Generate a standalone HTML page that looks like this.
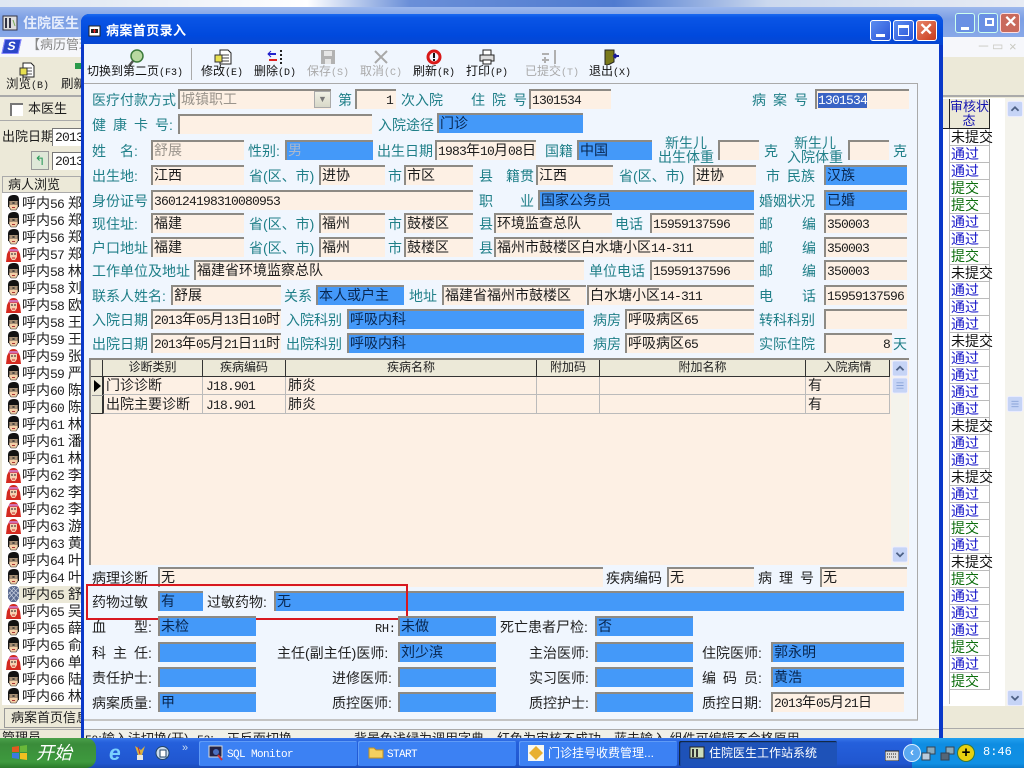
<!DOCTYPE html>
<html lang="zh"><head><meta charset="utf-8"><title>病案首页录入</title>
<style>
html,body{margin:0;padding:0;width:1024px;height:768px;overflow:hidden;background:#ece9d8}
body{position:relative;font:14px/17px "Liberation Sans","Noto Sans CJK SC",sans-serif;color:#1c1c1c}
div,span,b,svg{position:absolute;white-space:nowrap;box-sizing:border-box}
i{font:13px/17px "Liberation Mono",monospace;font-style:normal;letter-spacing:-.8px}
em{font-style:normal;letter-spacing:0}
b{font-weight:normal;height:20px;border-top:2px solid #8d8a84;border-left:2px solid #8d8a84;padding-left:1px;line-height:16px;overflow:hidden}
b.f{background:#fdf0e4}
b.b{background:#4499f9;color:#08264f}
b.s{background:#fdf0e4;color:#9a948c}
span.l{color:#1f7f88}
span.k{color:#222}
.m{left:22px;font-size:14px;color:#222}
.st{left:951px;font-size:14px;line-height:16px;width:38px}
.tbtn{height:25px;top:741px;background:#3c81f3;border-radius:2px;color:#fff;font-size:12px;line-height:24px;box-shadow:inset 1px 1px 0 #5f9bf7}
.tbtn i{color:#fff;line-height:24px;font-size:11px;letter-spacing:-.6px}
.wb{width:21px;height:21px;border:1px solid #fff;border-radius:3px;background:linear-gradient(135deg,#5a8cf0,#2a55d8)}
.hd{top:360px;height:17px;background:#ece9d8;border-right:1px solid #333;border-bottom:1px solid #333;text-align:center;font-size:12px;line-height:15px;color:#222}
.cl{height:18px;border-right:1px solid #bbb;border-bottom:1px solid #bbb;line-height:17px;padding-left:2px;font-size:14px;color:#222}
.r2{height:19px;line-height:19px}
.tb{top:64px;font-size:12px;color:#111;line-height:15px}
.tb i{font-size:10px;letter-spacing:0;line-height:15px}
.gr{color:#aaa}
</style></head><body>
<svg width="0" height="0" style="position:absolute">
<symbol id="ma" viewBox="0 0 15 16"><path d="M2 12V5C2 1 5 0 8 0s5 1 5 5v7z" fill="#111"/><path d="M3 5h9v7l-2 3H5l-2-3z" fill="#f4cfa6" stroke="#222" stroke-width=".6"/><path d="M3 4h9v2H3z" fill="#111"/><path d="M3 7h4v2H3zM8 7h4v2H8z" fill="none" stroke="#222" stroke-width=".8"/><path d="M6 12.500h3" stroke="#a33"/></symbol>
<symbol id="fe" viewBox="0 0 15 16"><path d="M3 4C4 0 11 0 12 4l2 4 1 8H0l1-8z" fill="#d42a20"/><path d="M4 6h7v5l-2 3H6L4 11z" fill="#f6d0b0"/><path d="M3 3h9v2.500H3z" fill="#d070b0"/><path d="M5 8h2M8 8h2" stroke="#222"/><path d="M6 12h3" stroke="#c22"/></symbol>
<symbol id="sl" viewBox="0 0 15 16"><path d="M2 5C2 1 5 0 8 0s5 1 5 5v7l-3 4H5l-3-4z" fill="#5a6a90"/><path d="M3 2l10 10M3 6l7 9M6 1l7 7M12 2L3 12M9 1L2 9M13 6l-8 9" stroke="#c8d0e0" stroke-width=".7"/></symbol>
<symbol id="dn" viewBox="0 0 18 18"><rect x=".5" y=".5" width="17" height="17" rx="2" fill="#c6d4f6" stroke="#eef" /><path d="M5 7l4 4 4-4" fill="none" stroke="#4d6185" stroke-width="2"/></symbol>
<symbol id="up" viewBox="0 0 18 18"><rect x=".5" y=".5" width="17" height="17" rx="2" fill="#c6d4f6" stroke="#eef"/><path d="M5 11l4-4 4 4" fill="none" stroke="#4d6185" stroke-width="2"/></symbol>
<symbol id="th" viewBox="0 0 18 18"><rect x=".5" y=".5" width="17" height="17" rx="2" fill="#c6d4f6" stroke="#eef"/><path d="M5 6h8M5 9h8M5 12h8" stroke="#8aa3d8"/></symbol>
</svg>

<!-- desktop sky -->
<div style="left:0;top:0;width:1024px;height:8px;background:linear-gradient(90deg,#dfe7f2,#e4ebf4 10%,#fff 30%,#6a8fd8 40%,#4f7bd0 60%,#cbd8ee 75%,#e8ecf4)"></div>

<!-- back window -->
<div style="left:0;top:7px;width:1024px;height:30px;background:linear-gradient(#9db8ec,#7c9fe4 40%,#88a8e8)"></div>
<svg style="left:2px;top:15px" width="16" height="16"><rect x="1" y="1" width="14" height="14" fill="#ddd" stroke="#334"/><path d="M4 3v10M8 3v10" stroke="#334" stroke-width="2"/><path d="M11 5l2 6" stroke="#7a5"/></svg>
<span style="left:23px;top:15px;color:#e8eefc;font-size:14px;font-weight:bold">住院医生</span>
<div class="wb" style="left:955px;top:13px;width:20px;height:20px;background:#6a90e4;border-color:#cfe"></div>
<div style="left:961px;top:27px;width:8px;height:3px;background:#fff"></div>
<div class="wb" style="left:978px;top:13px;width:20px;height:20px;background:#6a90e4;border-color:#cfe"></div>
<div style="left:985px;top:18px;width:9px;height:8px;border:2px solid #fff"></div>
<div class="wb" style="left:1000px;top:13px;width:20px;height:20px;background:#c96a5c;border-color:#fdd"></div>
<span style="left:1004px;top:14px;color:#fff;font-size:16px;font-weight:bold">✕</span>
<div style="left:0;top:37px;width:1024px;height:20px;background:#f6f7fb"></div>
<div style="left:3px;top:39px;width:17px;height:15px;background:#2a46c8;border:1px solid #88f;transform:skewX(-12deg);color:#fff;font:bold 12px/13px 'Liberation Sans',sans-serif;text-align:center">S</div>
<span style="left:27px;top:36px;font-size:13px;color:#888">【病历管理</span>
<span style="left:977px;top:38px;color:#c8c8c0;font-size:13px">－</span><span style="left:992px;top:38px;color:#c8c8c0;font-size:12px">▭</span><span style="left:1009px;top:38px;color:#c8c8c0;font-size:13px">×</span>
<div style="left:0;top:57px;width:1024px;height:40px;background:#ece9d8;border-bottom:2px solid #aaa"></div>
<svg style="left:19px;top:62px" width="17" height="16"><path d="M4 1h8l3 3v11H4z" fill="#fff" stroke="#222"/><path d="M6 6h7M6 9h7M6 12h7" stroke="#555"/><path d="M1 6h7v7H1z" fill="#e8e050" stroke="#333"/></svg>
<span style="left:6px;top:76px;font-size:12.5px">浏览<i style="font-size:10px;letter-spacing:0">(B)</i></span>
<span style="left:61px;top:76px;font-size:12.5px">刷新</span>
<div style="left:75px;top:63px;width:6px;height:6px;background:#2a9a4a"></div>
<div style="left:0;top:97px;width:81px;height:24px;background:#ece9d8;border-bottom:1px solid #aaa"></div>
<div style="left:10px;top:103px;width:13px;height:13px;background:#fff;border-top:2px solid #777;border-left:2px solid #777"></div>
<span style="left:28px;top:100px;font-size:13px">本医生</span>
<div style="left:0;top:122px;width:81px;height:54px;background:#ece9d8"></div>
<span style="left:2px;top:128px;font-size:13px">出院日期</span>
<div style="left:52px;top:128px;width:30px;height:18px;background:#fff;border-top:1px solid #777;border-left:1px solid #777"><i style="position:absolute;left:2px;top:0">2013</i></div>
<div style="left:52px;top:152px;width:30px;height:18px;background:#fff;border-top:1px solid #777;border-left:1px solid #777"><i style="position:absolute;left:2px;top:0">2013</i></div>
<div style="left:31px;top:151px;width:18px;height:19px;background:#dfe8d8;border:1px solid #999;color:#2a9a5a;font-size:13px;line-height:17px;text-align:center">↰</div>
<div style="left:2px;top:176px;width:79px;height:17px;background:#ece9d8;border:1px solid #aaa;font-size:13px;line-height:15px;padding-left:5px">病人浏览</div>
<div style="left:2px;top:193px;width:79px;height:512px;background:#fff"></div>
<div style="left:19px;top:586px;width:62px;height:17px;background:#ece9d8"></div>

<svg style="left:6px;top:195px" width="15" height="16"><use href="#ma"/></svg><span class="m" style="top:195px">呼内<i>56</i> 郑</span>
<svg style="left:6px;top:212px" width="15" height="16"><use href="#ma"/></svg><span class="m" style="top:212px">呼内<i>56</i> 郑</span>
<svg style="left:6px;top:229px" width="15" height="16"><use href="#ma"/></svg><span class="m" style="top:229px">呼内<i>56</i> 郑</span>
<svg style="left:6px;top:246px" width="15" height="16"><use href="#fe"/></svg><span class="m" style="top:246px">呼内<i>57</i> 郑</span>
<svg style="left:6px;top:263px" width="15" height="16"><use href="#ma"/></svg><span class="m" style="top:263px">呼内<i>58</i> 林</span>
<svg style="left:6px;top:280px" width="15" height="16"><use href="#ma"/></svg><span class="m" style="top:280px">呼内<i>58</i> 刘</span>
<svg style="left:6px;top:297px" width="15" height="16"><use href="#fe"/></svg><span class="m" style="top:297px">呼内<i>58</i> 欧</span>
<svg style="left:6px;top:314px" width="15" height="16"><use href="#ma"/></svg><span class="m" style="top:314px">呼内<i>58</i> 王</span>
<svg style="left:6px;top:331px" width="15" height="16"><use href="#ma"/></svg><span class="m" style="top:331px">呼内<i>59</i> 王</span>
<svg style="left:6px;top:348px" width="15" height="16"><use href="#fe"/></svg><span class="m" style="top:348px">呼内<i>59</i> 张</span>
<svg style="left:6px;top:365px" width="15" height="16"><use href="#ma"/></svg><span class="m" style="top:365px">呼内<i>59</i> 严</span>
<svg style="left:6px;top:382px" width="15" height="16"><use href="#ma"/></svg><span class="m" style="top:382px">呼内<i>60</i> 陈</span>
<svg style="left:6px;top:399px" width="15" height="16"><use href="#ma"/></svg><span class="m" style="top:399px">呼内<i>60</i> 陈</span>
<svg style="left:6px;top:416px" width="15" height="16"><use href="#ma"/></svg><span class="m" style="top:416px">呼内<i>61</i> 林</span>
<svg style="left:6px;top:433px" width="15" height="16"><use href="#ma"/></svg><span class="m" style="top:433px">呼内<i>61</i> 潘</span>
<svg style="left:6px;top:450px" width="15" height="16"><use href="#ma"/></svg><span class="m" style="top:450px">呼内<i>61</i> 林</span>
<svg style="left:6px;top:467px" width="15" height="16"><use href="#fe"/></svg><span class="m" style="top:467px">呼内<i>62</i> 李</span>
<svg style="left:6px;top:484px" width="15" height="16"><use href="#fe"/></svg><span class="m" style="top:484px">呼内<i>62</i> 李</span>
<svg style="left:6px;top:501px" width="15" height="16"><use href="#fe"/></svg><span class="m" style="top:501px">呼内<i>62</i> 李</span>
<svg style="left:6px;top:518px" width="15" height="16"><use href="#fe"/></svg><span class="m" style="top:518px">呼内<i>63</i> 游</span>
<svg style="left:6px;top:535px" width="15" height="16"><use href="#ma"/></svg><span class="m" style="top:535px">呼内<i>63</i> 黄</span>
<svg style="left:6px;top:552px" width="15" height="16"><use href="#ma"/></svg><span class="m" style="top:552px">呼内<i>64</i> 叶</span>
<svg style="left:6px;top:569px" width="15" height="16"><use href="#ma"/></svg><span class="m" style="top:569px">呼内<i>64</i> 叶</span>
<svg style="left:6px;top:586px" width="15" height="16"><use href="#sl"/></svg><span class="m" style="top:586px">呼内<i>65</i> 舒</span>
<svg style="left:6px;top:603px" width="15" height="16"><use href="#fe"/></svg><span class="m" style="top:603px">呼内<i>65</i> 吴</span>
<svg style="left:6px;top:620px" width="15" height="16"><use href="#ma"/></svg><span class="m" style="top:620px">呼内<i>65</i> 薛</span>
<svg style="left:6px;top:637px" width="15" height="16"><use href="#ma"/></svg><span class="m" style="top:637px">呼内<i>65</i> 俞</span>
<svg style="left:6px;top:654px" width="15" height="16"><use href="#fe"/></svg><span class="m" style="top:654px">呼内<i>66</i> 单</span>
<svg style="left:6px;top:671px" width="15" height="16"><use href="#ma"/></svg><span class="m" style="top:671px">呼内<i>66</i> 陆</span>
<svg style="left:6px;top:688px" width="15" height="16"><use href="#ma"/></svg><span class="m" style="top:688px">呼内<i>66</i> 林</span>

<div style="left:4px;top:708px;width:78px;height:20px;background:#ece9d8;border:1px solid #999;font-size:13px;line-height:18px;padding-left:6px;overflow:hidden">病案首页信息</div>
<div style="left:0;top:729px;width:81px;height:12px;background:#ece9d8;border-top:1px solid #aaa;font-size:13px;padding-left:2px;line-height:16px;overflow:hidden">管理员</div>

<!-- right of back window -->
<div style="left:943px;top:97px;width:81px;height:3px;background:#ece9d8;border-bottom:1px solid #aaa"></div>
<div style="left:943px;top:98px;width:81px;height:608px;background:#fff"></div>
<div style="left:1005px;top:98px;width:19px;height:608px;background:#f4f3ec"></div>
<div style="left:943px;top:706px;width:81px;height:22px;background:#ece9d8"></div>
<div style="left:943px;top:728px;width:81px;height:12px;background:#ece9d8;border-top:1px solid #aaa"></div>
<div style="left:943px;top:99px;width:47px;height:30px;background:#ece9d8;border-right:1px solid #222;border-bottom:1px solid #222"></div>
<div style="left:949px;top:99px;width:1px;height:30px;background:#222"></div>
<span class="st" style="top:100px;color:#1515b0;line-height:14px;text-align:center;font-size:13px;width:38px;left:950px">审核状<br>态</span>
<div style="left:949px;top:129px;width:1px;height:575px;background:#bbb"></div>
<div style="left:989px;top:129px;width:1px;height:560px;background:#bbb"></div>
<div style="left:950px;top:145px;width:40px;height:1px;background:#bbb"></div><div style="left:950px;top:162px;width:40px;height:1px;background:#bbb"></div><div style="left:950px;top:179px;width:40px;height:1px;background:#bbb"></div><div style="left:950px;top:196px;width:40px;height:1px;background:#bbb"></div><div style="left:950px;top:213px;width:40px;height:1px;background:#bbb"></div><div style="left:950px;top:230px;width:40px;height:1px;background:#bbb"></div><div style="left:950px;top:247px;width:40px;height:1px;background:#bbb"></div><div style="left:950px;top:264px;width:40px;height:1px;background:#bbb"></div><div style="left:950px;top:281px;width:40px;height:1px;background:#bbb"></div><div style="left:950px;top:298px;width:40px;height:1px;background:#bbb"></div><div style="left:950px;top:315px;width:40px;height:1px;background:#bbb"></div><div style="left:950px;top:332px;width:40px;height:1px;background:#bbb"></div><div style="left:950px;top:349px;width:40px;height:1px;background:#bbb"></div><div style="left:950px;top:366px;width:40px;height:1px;background:#bbb"></div><div style="left:950px;top:383px;width:40px;height:1px;background:#bbb"></div><div style="left:950px;top:400px;width:40px;height:1px;background:#bbb"></div><div style="left:950px;top:417px;width:40px;height:1px;background:#bbb"></div><div style="left:950px;top:434px;width:40px;height:1px;background:#bbb"></div><div style="left:950px;top:451px;width:40px;height:1px;background:#bbb"></div><div style="left:950px;top:468px;width:40px;height:1px;background:#bbb"></div><div style="left:950px;top:485px;width:40px;height:1px;background:#bbb"></div><div style="left:950px;top:502px;width:40px;height:1px;background:#bbb"></div><div style="left:950px;top:519px;width:40px;height:1px;background:#bbb"></div><div style="left:950px;top:536px;width:40px;height:1px;background:#bbb"></div><div style="left:950px;top:553px;width:40px;height:1px;background:#bbb"></div><div style="left:950px;top:570px;width:40px;height:1px;background:#bbb"></div><div style="left:950px;top:587px;width:40px;height:1px;background:#bbb"></div><div style="left:950px;top:604px;width:40px;height:1px;background:#bbb"></div><div style="left:950px;top:621px;width:40px;height:1px;background:#bbb"></div><div style="left:950px;top:638px;width:40px;height:1px;background:#bbb"></div><div style="left:950px;top:655px;width:40px;height:1px;background:#bbb"></div><div style="left:950px;top:672px;width:40px;height:1px;background:#bbb"></div><div style="left:950px;top:689px;width:40px;height:1px;background:#bbb"></div>
<span class="st" style="top:129px;color:#111">未提交</span>
<span class="st" style="top:146px;color:#1515c8">通过</span>
<span class="st" style="top:163px;color:#1515c8">通过</span>
<span class="st" style="top:180px;color:#0d6e0d">提交</span>
<span class="st" style="top:197px;color:#0d6e0d">提交</span>
<span class="st" style="top:214px;color:#1515c8">通过</span>
<span class="st" style="top:231px;color:#1515c8">通过</span>
<span class="st" style="top:248px;color:#0d6e0d">提交</span>
<span class="st" style="top:265px;color:#111">未提交</span>
<span class="st" style="top:282px;color:#1515c8">通过</span>
<span class="st" style="top:299px;color:#1515c8">通过</span>
<span class="st" style="top:316px;color:#1515c8">通过</span>
<span class="st" style="top:333px;color:#111">未提交</span>
<span class="st" style="top:350px;color:#1515c8">通过</span>
<span class="st" style="top:367px;color:#1515c8">通过</span>
<span class="st" style="top:384px;color:#1515c8">通过</span>
<span class="st" style="top:401px;color:#1515c8">通过</span>
<span class="st" style="top:418px;color:#111">未提交</span>
<span class="st" style="top:435px;color:#1515c8">通过</span>
<span class="st" style="top:452px;color:#1515c8">通过</span>
<span class="st" style="top:469px;color:#111">未提交</span>
<span class="st" style="top:486px;color:#1515c8">通过</span>
<span class="st" style="top:503px;color:#1515c8">通过</span>
<span class="st" style="top:520px;color:#0d6e0d">提交</span>
<span class="st" style="top:537px;color:#1515c8">通过</span>
<span class="st" style="top:554px;color:#111">未提交</span>
<span class="st" style="top:571px;color:#0d6e0d">提交</span>
<span class="st" style="top:588px;color:#1515c8">通过</span>
<span class="st" style="top:605px;color:#1515c8">通过</span>
<span class="st" style="top:622px;color:#1515c8">通过</span>
<span class="st" style="top:639px;color:#0d6e0d">提交</span>
<span class="st" style="top:656px;color:#1515c8">通过</span>
<span class="st" style="top:673px;color:#0d6e0d">提交</span>
<svg style="left:1007px;top:100px" width="16" height="18"><use href="#up"/></svg>
<svg style="left:1007px;top:395px" width="16" height="18"><use href="#th"/></svg>
<svg style="left:1007px;top:689px" width="16" height="18"><use href="#dn"/></svg>

<!-- dialog -->
<div style="left:81px;top:14px;width:862px;height:725px;background:#0a38c8;border-radius:8px 8px 0 0"></div>
<div style="left:81px;top:14px;width:862px;height:31px;background:linear-gradient(#1a6af0,#0a55e6 12%,#0049dd 70%,#0746d0);border-radius:8px 8px 0 0"></div>
<div style="left:84px;top:44px;width:855px;height:695px;background:#f0f6fe"></div>
<svg style="left:88px;top:24px" width="13" height="13"><rect x="1" y="2" width="11" height="10" fill="#fff" stroke="#222"/><rect x="3" y="5" width="7" height="4" fill="#222"/><path d="M6.500 5v4M5 7h3" stroke="#e22"/></svg>
<span style="left:106px;top:22px;color:#fff;font-size:13px;font-weight:bold;letter-spacing:.4px">病案首页录入</span>
<div class="wb" style="left:870px;top:20px"></div><div style="left:876px;top:34px;width:9px;height:3px;background:#fff"></div>
<div class="wb" style="left:893px;top:20px"></div><div style="left:898px;top:25px;width:11px;height:11px;border:1px solid #fff;border-top-width:3px"></div>
<div class="wb" style="left:916px;top:20px;background:linear-gradient(135deg,#e8866a,#c83a1c)"></div>
<span style="left:919px;top:21px;color:#fff;font-size:17px;font-weight:bold">✕</span>

<!-- toolbar -->
<div style="left:191px;top:48px;width:1px;height:32px;background:#aaa"></div>
<svg style="left:127px;top:49px" width="18" height="18"><circle cx="10" cy="7" r="6" fill="#b8d8a0" stroke="#3c7a3c" stroke-width="1.500"/><path d="M6 12L2 17" stroke="#555" stroke-width="2.500"/></svg>
<span class="tb" style="left:87px">切换到第二页<i>(F3)</i></span>
<svg style="left:214px;top:49px" width="18" height="16"><path d="M6 1h8l3 3v11H6z" fill="#fff" stroke="#222"/><path d="M8 6h7M8 9h7M8 12h7" stroke="#444"/><path d="M1 6h7v7H1z" fill="#e8e050" stroke="#333"/></svg>
<span class="tb" style="left:201px">修改<i>(E)</i></span>
<svg style="left:267px;top:49px" width="18" height="16"><path d="M1 5h8" stroke="#2222cc" stroke-width="2"/><path d="M4 2L1 5l3 3" fill="none" stroke="#2222cc"/><path d="M2 11h8" stroke="#d22" stroke-width="2"/><path d="M14 1v15" stroke="#222" stroke-width="2" stroke-dasharray="2 2"/></svg>
<span class="tb" style="left:254px">删除<i>(D)</i></span>
<svg style="left:321px;top:50px" width="14" height="14"><rect width="14" height="14" fill="#b2b2b2"/><rect x="3" y="1" width="8" height="5" fill="#e6e6e6"/><rect x="4" y="9" width="6" height="5" fill="#e6e6e6"/></svg>
<span class="tb gr" style="left:307px">保存<i>(S)</i></span>
<svg style="left:374px;top:50px" width="14" height="14"><path d="M1 1l12 12M13 1L1 13" stroke="#a8a8a8" stroke-width="2"/></svg>
<span class="tb gr" style="left:360px">取消<i>(C)</i></span>
<svg style="left:426px;top:49px" width="16" height="16"><circle cx="8" cy="8" r="6" fill="none" stroke="#d81818" stroke-width="3"/><path d="M8 4v5M8 10v2" stroke="#111" stroke-width="2"/></svg>
<span class="tb" style="left:413px">刷新<i>(R)</i></span>
<svg style="left:479px;top:49px" width="16" height="16"><path d="M4 1h8v5H4z" fill="#fff" stroke="#222"/><path d="M1 6h14v6H1z" fill="#ddd" stroke="#222"/><path d="M4 11h8v4H4z" fill="#fff" stroke="#222"/></svg>
<span class="tb" style="left:466px">打印<i>(P)</i></span>
<svg style="left:541px;top:50px" width="16" height="14"><path d="M1 4h7M1 10h7M4 7v6M14 0v14" stroke="#b0b0b0" stroke-width="2"/></svg>
<span class="tb gr" style="left:525px">已提交<i>(T)</i></span>
<svg style="left:604px;top:49px" width="16" height="16"><path d="M1 1h9v12l-6 3H1z" fill="#7a7a1c" stroke="#222"/><path d="M10 7h5M12 5l-2 2 2 2" stroke="#1a1a9a" stroke-width="2" fill="none"/></svg>
<span class="tb" style="left:589px">退出<i>(X)</i></span>

<!-- form panel -->
<div style="left:84px;top:83px;width:834px;height:1px;background:#aaa"></div>
<div style="left:84px;top:719px;width:834px;height:2px;background:#c4c4c4"></div>
<div style="left:917px;top:83px;width:1px;height:637px;background:#aaa"></div>

<span class="l" style="left:92px;top:92px">医疗付款方式</span>
<b class="s" style="left:178px;top:89px;width:153px">城镇职工</b>
<div style="left:314px;top:91px;width:17px;height:17px;background:linear-gradient(#f0f0e4,#d8d8c8);border:1px solid #aaa;color:#777;font-size:9px;line-height:15px;text-align:center">▼</div>
<span class="l" style="left:338px;top:92px">第</span>
<b class="f" style="left:355px;top:89px;width:41px;text-align:right;padding-right:3px"><i>1</i></b>
<span class="l" style="left:401px;top:92px">次入院</span>
<span class="l" style="left:471px;top:92px;letter-spacing:7px">住院号</span>
<b class="f" style="left:529px;top:89px;width:82px"><i>1301534</i></b>
<span class="l" style="left:752px;top:92px;letter-spacing:7px">病案号</span>
<b class="f" style="left:815px;top:89px;width:94px"><i style="background:#3a63c4;color:#fff;display:inline-block;line-height:15px">1301534</i></b>

<span class="l" style="left:92px;top:117px;letter-spacing:7px">健康卡<em>号:</em></span>
<b class="f" style="left:178px;top:114px;width:194px"></b>
<span class="l" style="left:378px;top:117px">入院途径</span>
<b class="b" style="left:437px;top:113px;width:146px">门诊</b>

<span class="l" style="left:92px;top:143px;letter-spacing:14px">姓<em>名:</em></span>
<b class="s" style="left:151px;top:140px;width:93px">舒展</b>
<span class="l" style="left:248px;top:143px">性别:</span>
<b class="b" style="left:285px;top:140px;width:88px;color:#aab8cc">男</b>
<span class="l" style="left:377px;top:143px">出生日期</span>
<b class="f" style="left:435px;top:140px;width:101px"><i>1983</i>年<i>10</i>月<i>08</i>日</b>
<span class="l" style="left:545px;top:143px">国籍</span>
<b class="b" style="left:577px;top:140px;width:75px">中国</b>
<span class="l" style="left:658px;top:136px;width:56px;text-align:center;line-height:14px">新生儿<br>出生体重</span>
<b class="f" style="left:718px;top:140px;width:41px"></b>
<span class="l" style="left:764px;top:143px">克</span>
<span class="l" style="left:787px;top:136px;width:56px;text-align:center;line-height:14px">新生儿<br>入院体重</span>
<b class="f" style="left:848px;top:140px;width:41px"></b>
<span class="l" style="left:893px;top:143px">克</span>

<span class="l" style="left:92px;top:168px">出生地:</span>
<b class="f" style="left:151px;top:165px;width:93px">江西</b>
<span class="l" style="left:249px;top:168px">省(区、市)</span>
<b class="f" style="left:319px;top:165px;width:66px">进协</b>
<span class="l" style="left:388px;top:168px">市</span>
<b class="f" style="left:404px;top:165px;width:69px">市区</b>
<span class="l" style="left:479px;top:168px">县</span>
<span class="l" style="left:506px;top:168px">籍贯</span>
<b class="f" style="left:536px;top:165px;width:77px">江西</b>
<span class="l" style="left:619px;top:168px">省(区、市)</span>
<b class="f" style="left:693px;top:165px;width:63px">进协</b>
<span class="l" style="left:766px;top:168px">市</span>
<span class="l" style="left:787px;top:168px">民族</span>
<b class="b" style="left:824px;top:165px;width:83px">汉族</b>

<span class="l" style="left:92px;top:193px">身份证号</span>
<b class="f" style="left:151px;top:190px;width:322px"><i>360124198310080953</i></b>
<span class="l" style="left:479px;top:193px">职</span>
<span class="l" style="left:520px;top:193px">业</span>
<b class="b" style="left:538px;top:190px;width:216px">国家公务员</b>
<span class="l" style="left:759px;top:193px">婚姻状况</span>
<b class="b" style="left:824px;top:190px;width:83px">已婚</b>

<span class="l" style="left:92px;top:216px">现住址:</span>
<b class="f" style="left:151px;top:213px;width:93px">福建</b>
<span class="l" style="left:249px;top:216px">省(区、市)</span>
<b class="f" style="left:319px;top:213px;width:66px">福州</b>
<span class="l" style="left:388px;top:216px">市</span>
<b class="f" style="left:404px;top:213px;width:69px">鼓楼区</b>
<span class="l" style="left:479px;top:216px">县</span>
<b class="f" style="left:494px;top:213px;width:118px">环境监查总队</b>
<span class="l" style="left:615px;top:216px">电话</span>
<b class="f" style="left:650px;top:213px;width:104px"><i>15959137596</i></b>
<span class="l" style="left:759px;top:216px">邮</span><span class="l" style="left:802px;top:216px">编</span>
<b class="f" style="left:824px;top:213px;width:83px"><i>350003</i></b>

<span class="l" style="left:92px;top:240px">户口地址</span>
<b class="f" style="left:151px;top:237px;width:93px">福建</b>
<span class="l" style="left:249px;top:240px">省(区、市)</span>
<b class="f" style="left:319px;top:237px;width:66px">福州</b>
<span class="l" style="left:388px;top:240px">市</span>
<b class="f" style="left:404px;top:237px;width:69px">鼓楼区</b>
<span class="l" style="left:479px;top:240px">县</span>
<b class="f" style="left:494px;top:237px;width:260px">福州市鼓楼区白水塘小区<i>14-311</i></b>
<span class="l" style="left:759px;top:240px">邮</span><span class="l" style="left:802px;top:240px">编</span>
<b class="f" style="left:824px;top:237px;width:83px"><i>350003</i></b>

<span class="l" style="left:92px;top:263px">工作单位及地址</span>
<b class="f" style="left:194px;top:260px;width:390px">福建省环境监察总队</b>
<span class="l" style="left:589px;top:263px">单位电话</span>
<b class="f" style="left:650px;top:260px;width:104px"><i>15959137596</i></b>
<span class="l" style="left:759px;top:263px">邮</span><span class="l" style="left:802px;top:263px">编</span>
<b class="f" style="left:824px;top:260px;width:83px"><i>350003</i></b>

<span class="l" style="left:92px;top:288px">联系人姓名:</span>
<b class="f" style="left:171px;top:285px;width:110px">舒展</b>
<span class="l" style="left:284px;top:288px">关系</span>
<b class="b" style="left:316px;top:285px;width:88px">本人或户主</b>
<span class="l" style="left:409px;top:288px">地址</span>
<b class="f" style="left:442px;top:285px;width:144px">福建省福州市鼓楼区</b>
<b class="f" style="left:587px;top:285px;width:167px">白水塘小区<i>14-311</i></b>
<span class="l" style="left:759px;top:288px">电</span><span class="l" style="left:802px;top:288px">话</span>
<b class="f" style="left:824px;top:285px;width:83px"><i>15959137596</i></b>

<span class="l" style="left:92px;top:312px">入院日期</span>
<b class="f" style="left:151px;top:309px;width:130px"><i>2013</i>年<i>05</i>月<i>13</i>日<i>10</i>时</b>
<span class="l" style="left:286px;top:312px">入院科别</span>
<b class="b" style="left:347px;top:309px;width:237px">呼吸内科</b>
<span class="l" style="left:593px;top:312px">病房</span>
<b class="f" style="left:625px;top:309px;width:129px">呼吸病区<i>65</i></b>
<span class="l" style="left:759px;top:312px">转科科别</span>
<b class="f" style="left:824px;top:309px;width:83px"></b>

<span class="l" style="left:92px;top:336px">出院日期</span>
<b class="f" style="left:151px;top:333px;width:130px"><i>2013</i>年<i>05</i>月<i>21</i>日<i>11</i>时</b>
<span class="l" style="left:286px;top:336px">出院科别</span>
<b class="b" style="left:347px;top:333px;width:237px">呼吸内科</b>
<span class="l" style="left:593px;top:336px">病房</span>
<b class="f" style="left:625px;top:333px;width:129px">呼吸病区<i>65</i></b>
<span class="l" style="left:759px;top:336px">实际住院</span>
<b class="f" style="left:824px;top:333px;width:68px;text-align:right;padding-right:2px"><i>8</i></b>
<span class="l" style="left:893px;top:336px">天</span>

<!-- grid -->
<div style="left:89px;top:358px;width:820px;height:207px;background:#fdf0e4;border-top:2px solid #8d8a84;border-left:2px solid #8d8a84"></div>
<div class="hd" style="left:91px;width:12px"></div>
<div class="hd" style="left:103px;width:100px">诊断类别</div>
<div class="hd" style="left:203px;width:83px">疾病编码</div>
<div class="hd" style="left:286px;width:251px">疾病名称</div>
<div class="hd" style="left:537px;width:63px">附加码</div>
<div class="hd" style="left:600px;width:206px">附加名称</div>
<div class="hd" style="left:806px;width:84px">入院病情</div>
<div style="left:91px;top:377px;width:12px;height:37px;background:#ece9d8;border-right:1px solid #333;border-bottom:1px solid #333"></div>
<div style="left:92px;top:395px;width:11px;height:1px;background:#999"></div>
<span style="left:94px;top:380px;width:0;height:0;border-left:7px solid #000;border-top:6px solid transparent;border-bottom:6px solid transparent"></span>
<div class="cl" style="left:103px;top:377px;width:100px;border-left:1px solid #333">门诊诊断</div>
<div class="cl" style="left:203px;top:377px;width:83px"><i style="padding-left:1px">J18.901</i></div>
<div class="cl" style="left:286px;top:377px;width:251px">肺炎</div>
<div class="cl" style="left:537px;top:377px;width:63px"></div>
<div class="cl" style="left:600px;top:377px;width:206px"></div>
<div class="cl" style="left:806px;top:377px;width:84px">有</div>
<div class="cl r2" style="left:103px;top:395px;width:100px;border-left:1px solid #333">出院主要诊断</div>
<div class="cl r2" style="left:203px;top:395px;width:83px"><i style="padding-left:1px">J18.901</i></div>
<div class="cl r2" style="left:286px;top:395px;width:251px">肺炎</div>
<div class="cl r2" style="left:537px;top:395px;width:63px"></div>
<div class="cl r2" style="left:600px;top:395px;width:206px"></div>
<div class="cl r2" style="left:806px;top:395px;width:84px">有</div>
<div style="left:891px;top:360px;width:17px;height:205px;background:#f4f3ec"></div>
<svg style="left:892px;top:360px" width="16" height="17"><use href="#up"/></svg>
<svg style="left:892px;top:377px" width="16" height="17"><use href="#th"/></svg>
<svg style="left:892px;top:546px" width="16" height="17"><use href="#dn"/></svg>

<!-- bottom rows -->
<span class="k" style="left:92px;top:570px">病理诊断</span>
<b class="f" style="left:158px;top:567px;width:445px">无</b>
<span class="k" style="left:606px;top:570px">疾病编码</span>
<b class="f" style="left:667px;top:567px;width:87px">无</b>
<span class="k" style="left:758px;top:570px;letter-spacing:7px">病理号</span>
<b class="f" style="left:820px;top:567px;width:87px">无</b>

<span class="k" style="left:92px;top:594px">药物过敏</span>
<b class="b" style="left:158px;top:591px;width:45px">有</b>
<span class="k" style="left:207px;top:594px">过敏药物:</span>
<b class="b" style="left:274px;top:591px;width:630px">无</b>
<div style="left:86px;top:584px;width:322px;height:36px;border:2px solid #d81820"></div>

<span class="k" style="left:92px;top:619px;letter-spacing:28px">血<em>型:</em></span>
<b class="b" style="left:158px;top:616px;width:98px">未检</b>
<span class="k" style="left:375px;top:619px"><i style="font-size:12px;letter-spacing:-.3px">RH:</i></span>
<b class="b" style="left:398px;top:616px;width:98px">未做</b>
<span class="k" style="left:500px;top:619px">死亡患者尸检:</span>
<b class="b" style="left:595px;top:616px;width:98px">否</b>

<span class="k" style="left:92px;top:645px;letter-spacing:7px">科主<em>任:</em></span>
<b class="b" style="left:158px;top:642px;width:98px"></b>
<span class="k" style="left:277px;top:645px">主任(副主任)医师:</span>
<b class="b" style="left:398px;top:642px;width:98px">刘少滨</b>
<span class="k" style="left:529px;top:645px">主治医师:</span>
<b class="b" style="left:595px;top:642px;width:98px"></b>
<span class="k" style="left:702px;top:645px">住院医师:</span>
<b class="b" style="left:771px;top:642px;width:133px">郭永明</b>

<span class="k" style="left:92px;top:670px">责任护士:</span>
<b class="b" style="left:158px;top:667px;width:98px"></b>
<span class="k" style="left:332px;top:670px">进修医师:</span>
<b class="b" style="left:398px;top:667px;width:98px"></b>
<span class="k" style="left:529px;top:670px">实习医师:</span>
<b class="b" style="left:595px;top:667px;width:98px"></b>
<span class="k" style="left:702px;top:670px;letter-spacing:7px">编码<em>员:</em></span>
<b class="b" style="left:771px;top:667px;width:133px">黄浩</b>

<span class="k" style="left:92px;top:695px">病案质量:</span>
<b class="b" style="left:158px;top:692px;width:98px">甲</b>
<span class="k" style="left:332px;top:695px">质控医师:</span>
<b class="b" style="left:398px;top:692px;width:98px"></b>
<span class="k" style="left:529px;top:695px">质控护士:</span>
<b class="b" style="left:595px;top:692px;width:98px"></b>
<span class="k" style="left:702px;top:695px">质控日期:</span>
<b class="f" style="left:771px;top:692px;width:133px"><i>2013</i>年<i>05</i>月<i>21</i>日</b>

<!-- status bar -->
<div style="left:84px;top:729px;width:855px;height:10px;overflow:hidden;font-size:13px;color:#222;background:#f0f0e8;border-top:1px solid #aaa">
<span style="left:1px;top:0"><i style="font-size:11px;letter-spacing:0">F9</i>:输入法切换(开)</span>
<span style="left:113px;top:0"><i style="font-size:11px;letter-spacing:0">F3</i>:　正反面切换</span>
<span style="left:270px;top:0">背景色浅绿为调用字典，红色为审核不成功</span>
<span style="left:530px;top:0">蓝去输入 组件可编辑不合格原用</span>
</div>

<!-- taskbar -->
<div style="left:0;top:738px;width:1024px;height:30px;background:linear-gradient(#3a78ea,#2560dc 15%,#2056cf 85%,#1a48b4)"></div>
<div style="left:0;top:738px;width:96px;height:30px;background:linear-gradient(#4aa04a,#3a8c3a 20%,#3e9a3e 80%,#2a7a2a);border-radius:0 10px 10px 0"></div>
<svg style="left:10px;top:744px" width="19" height="18"><path d="M2 3l7-1v6H2z" fill="#e25a20"/><path d="M10 2l7-1v7h-7z" fill="#6ab83a"/><path d="M2 9h7v6l-7-1z" fill="#3a7ae0"/><path d="M10 9h7v7l-7-1z" fill="#f0c020"/></svg>
<span style="left:36px;top:741px;color:#fff;font-size:18px;line-height:24px;font-style:italic">开始</span>
<span style="left:109px;top:742px;color:#7ad0ff;font:italic bold 21px/24px 'Liberation Sans',sans-serif">e</span>
<svg style="left:133px;top:745px" width="14" height="16"><path d="M2 1l3 9h4l3-9-4 4z" fill="#d8b040"/><path d="M4 10h6v5H4z" fill="#e8e8e0"/><path d="M5 2l2 7" stroke="#c03030"/></svg>
<svg style="left:155px;top:745px" width="15" height="16"><circle cx="7.500" cy="8" r="6.500" fill="#cde" stroke="#246"/><path d="M5 5h6v7H5z" fill="#fff" stroke="#246"/></svg>
<span style="left:182px;top:740px;color:#cde;font-size:11px">»</span>
<div class="tbtn" style="left:199px;width:158px;padding-left:28px"><i>SQL Monitor</i></div>
<svg style="left:208px;top:745px" width="16" height="16"><rect x="1" y="1" width="13" height="11" fill="#224" stroke="#ddd"/><circle cx="8" cy="7" r="3" fill="#4a70c0"/><path d="M10 10l4 5" stroke="#c33" stroke-width="2"/></svg>
<div class="tbtn" style="left:358px;width:158px;padding-left:29px"><i>START</i></div>
<svg style="left:368px;top:745px" width="16" height="14"><path d="M1 3h5l2 2h7v8H1z" fill="#f4d060" stroke="#c09020"/></svg>
<div class="tbtn" style="left:519px;width:158px;padding-left:29px;overflow:hidden">门诊挂号收费管理...</div>
<svg style="left:528px;top:745px" width="16" height="16"><rect width="16" height="16" fill="#f8f8f0"/><path d="M8 1l7 7-7 7-7-7z" fill="#e8b030"/></svg>
<div class="tbtn" style="left:679px;width:158px;padding-left:30px;background:#1e52b8;box-shadow:inset 1px 1px 1px #123">住院医生工作站系统</div>
<svg style="left:689px;top:745px" width="16" height="16"><rect x="1" y="2" width="14" height="11" fill="#cdb" stroke="#222"/><path d="M4 4v8M8 4v8" stroke="#333" stroke-width="2"/></svg>
<svg style="left:885px;top:748px" width="14" height="13"><rect y="3" width="14" height="10" fill="#ddd" stroke="#222"/><path d="M2 6h10M2 9h10" stroke="#222" stroke-dasharray="1 1"/></svg>
<div style="left:912px;top:738px;width:112px;height:30px;background:linear-gradient(#22a0ee,#0f8de2 20%,#1090e4 85%,#0a78c8)"></div>
<div style="left:903px;top:744px;width:18px;height:18px;border-radius:50%;background:#5aa8f0;border:1px solid #def;color:#fff;font:bold 12px/15px 'Liberation Sans',sans-serif;text-align:center">‹</div>
<svg style="left:921px;top:746px" width="15" height="15"><rect x="6" y="1" width="8" height="7" fill="#8ab" stroke="#345"/><rect x="1" y="7" width="8" height="7" fill="#bcd" stroke="#345"/></svg>
<svg style="left:940px;top:746px" width="15" height="15"><rect x="6" y="1" width="8" height="7" fill="#8ab" stroke="#345"/><rect x="1" y="7" width="8" height="7" fill="#567" stroke="#345"/></svg>
<div style="left:958px;top:745px;width:16px;height:16px;border-radius:50%;background:#e8d010;color:#000;font:bold 15px/15px 'Liberation Sans',sans-serif;text-align:center;box-shadow:0 0 0 1px #3a7a3a">+</div>
<span style="left:983px;top:744px;color:#fff;font:12px/17px 'Liberation Mono',monospace">8:46</span>
</body></html>
